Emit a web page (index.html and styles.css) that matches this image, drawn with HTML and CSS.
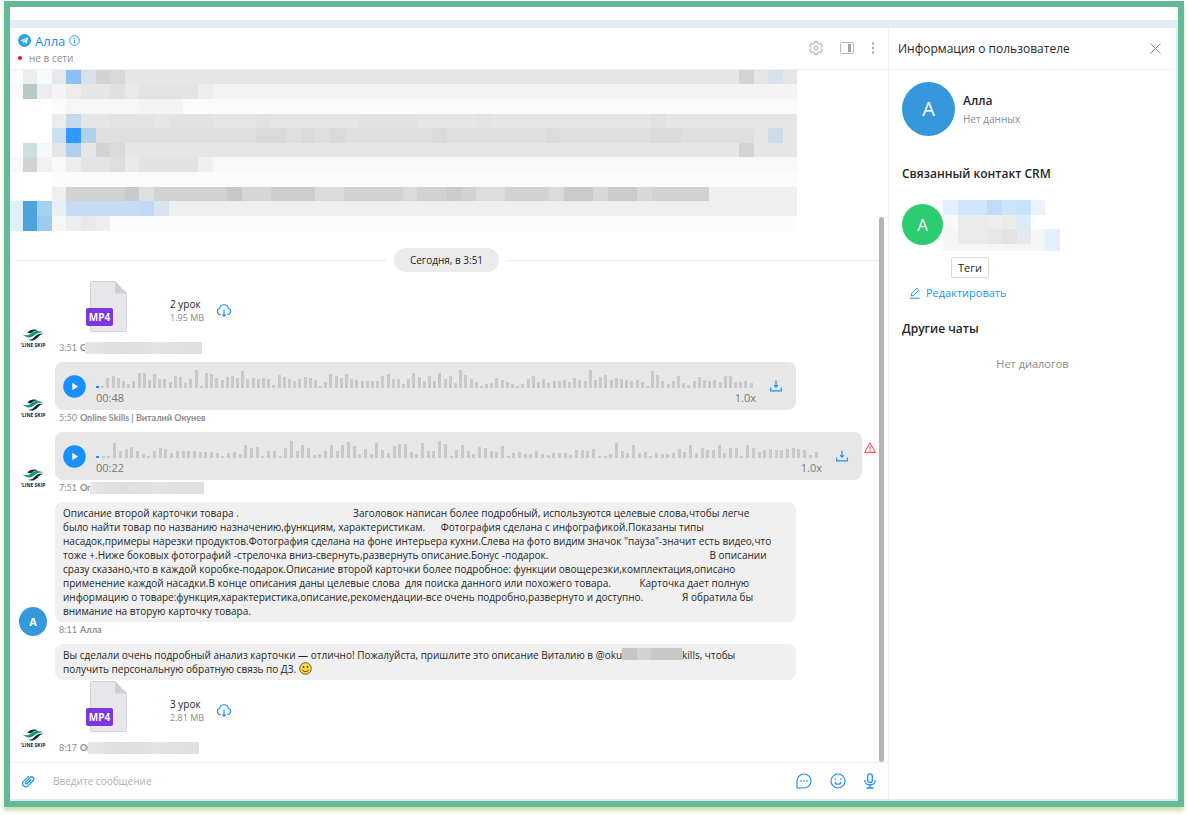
FILE: index.html
```html
<!DOCTYPE html>
<html lang="ru">
<head>
  <meta charset="UTF-8" />
  <meta name="viewport" content="width=device-width, initial-scale=1.0"/>
  <title>Чат - Алла</title>
  <link rel="stylesheet" href="styles.css">
</head>
<body>
  <!-- shared icons -->
  <svg class="sprite" aria-hidden="true">
    <symbol id="i-file" viewBox="0 0 42 51">
      <path d="M4.500 1.500a1 1 0 0 1 1-1H29L40.500 12v37.500a1 1 0 0 1-1 1h-34a1 1 0 0 1-1-1z" fill="#e6e6eb" stroke="#d2d2d8"/>
      <path d="M29 .5L40.500 12.500H30a1 1 0 0 1-1-1z" fill="#cfcfda"/>
      <rect x="0" y="27" width="27" height="18" rx="2" fill="#7a36e0"/>
    </symbol>
    <symbol id="i-cloud" viewBox="0 0 16 13">
      <path d="M5 10.500H4A3.200 3.200 0 0 1 3.600 4.300 4.500 4.500 0 0 1 12.400 4.300 3.200 3.200 0 0 1 12 10.500H11M8 5.500V12M6.300 10.300L8 12.200 9.700 10.300" fill="none" stroke="#1890ff" stroke-width="1.200"/>
    </symbol>
    <symbol id="i-play" viewBox="0 0 23 23">
      <circle cx="11.500" cy="11.500" r="11.300" fill="#1890ff"/>
      <path d="M9.300 7.700L15 11.500 9.300 15.300z" fill="#fff"/>
    </symbol>
    <symbol id="i-download" viewBox="0 0 12 12">
      <path d="M6 .5V7M4 5.200L6 7.200 8 5.200M.7 7.500V10.800H11.300V7.500" fill="none" stroke="#1890ff" stroke-width="1.200"/>
    </symbol>
    <symbol id="i-brand" viewBox="0 0 24 12">
      <path d="M6.500 3.900C8.500 .6 13.500 -.3 17 1.600 13.500 1.400 12 2.300 10 4.200z" fill="#15203a"/>
      <path d="M1.500 5C5 7.300 8 6 10.500 3.900 13.500 1.400 18 1.400 22 3.500 18 3.300 15.500 4.200 13 6.600 9.500 9.600 4.500 9 1.500 5z" fill="#179678"/>
      <path d="M14.200 7.200C16.500 4.800 19 4.500 22.300 4.800 19.500 5.500 18.300 6.800 16.800 8.500 14 11.800 9.500 12.400 6.800 10.600 10.500 10.900 12.500 9.300 14.200 7.200z" fill="#15203a"/>
    </symbol>
  </svg>

  <div class="frame">
    <div class="top-strip"></div>
    <div class="app">
      <main class="chat">
        <header class="chat-header">
          <div class="peer">
            <div class="peer-name">
              <svg width="13" height="13" viewBox="0 0 13 13"><circle cx="6.500" cy="6.500" r="6.500" fill="#2ca5e0"/><path d="M2.500 6.400L10 3.300 8.800 9.800 6.300 8 5.200 9.200 4.900 7.300z" fill="#fff"/><path d="M4.900 7.300L8.400 4.800" stroke="#2ca5e0" stroke-width=".7"/></svg>
              <a href="#">Алла</a>
              <svg width="11" height="11" viewBox="0 0 11 11" fill="none" stroke="#1890ff"><circle cx="5.500" cy="5.500" r="4.800" stroke-width=".9"/><path d="M5.500 4.700V8.200M5.500 2.700V3.700"/></svg>
            </div>
            <div class="peer-status"><span class="dot"></span>не в сети</div>
          </div>
          <div class="tools">
            <button aria-label="Настройки"><svg width="14" height="14" viewBox="0 0 14 14" fill="none" stroke="#9a9a9a" stroke-width=".9"><path d="M5.600 .7H8.400L8.900 2.500 10.300 3.300 12.100 2.800 13.400 5.200 12.100 6.500V7.500L13.400 8.800 12.100 11.200 10.300 10.700 8.900 11.500 8.400 13.300H5.600L5.100 11.500 3.700 10.700 1.900 11.200 .6 8.800 1.900 7.500V6.500L.6 5.200 1.900 2.800 3.700 3.300 5.100 2.500z"/><circle cx="7" cy="7" r="2.100"/></svg></button>
            <button aria-label="Панель"><svg width="14" height="12" viewBox="0 0 14 12"><rect x=".5" y=".5" width="13" height="11" rx="1" fill="#fff" stroke="#b8b8b8"/><rect x="8" y="2" width="3" height="8" fill="#a3a3a3"/></svg></button>
            <button aria-label="Меню"><svg width="4" height="12" viewBox="0 0 4 12" fill="#888"><circle cx="2" cy="1.500" r="1"/><circle cx="2" cy="6" r="1"/><circle cx="2" cy="10.500" r="1"/></svg></button>
          </div>
        </header>

        <section class="messages">
          <svg class="mosaic" id="history" width="787" height="161" viewBox="0 0 787 161" shape-rendering="crispEdges"></svg>

          <div class="day"><span>Сегодня, в 3:51</span></div>

          <article class="msg">
            <div class="brand"><svg width="24" height="12"><use href="#i-brand"/></svg><span>'LINE SKIP</span></div>
            <div class="msg-body">
              <div class="file">
                <div class="file-icon"><svg width="42" height="51"><use href="#i-file"/></svg><b>MP4</b></div>
                <div class="file-info"><span>2 урок</span><small>1.95 MB</small></div>
                <button aria-label="Скачать"><svg width="16" height="13"><use href="#i-cloud"/></svg></button>
              </div>
              <div class="meta">3:51 <b>O</b><i class="mask mask-a"></i></div>
            </div>
          </article>

          <article class="msg">
            <div class="brand"><svg width="24" height="12"><use href="#i-brand"/></svg><span>'LINE SKIP</span></div>
            <div class="msg-body">
              <div class="audio">
                <button aria-label="Слушать"><svg width="23" height="23"><use href="#i-play"/></svg></button>
                <div class="track">
                  <div class="wave" id="wave-1"></div>
                  <div class="track-info"><span>00:48</span><span>1.0x</span></div>
                </div>
                <button aria-label="Скачать"><svg width="12" height="12"><use href="#i-download"/></svg></button>
              </div>
              <div class="meta">5:50 <b>Online Skills | Виталий Окунев</b></div>
            </div>
          </article>

          <article class="msg msg-wide">
            <div class="brand"><svg width="24" height="12"><use href="#i-brand"/></svg><span>'LINE SKIP</span></div>
            <div class="msg-body">
              <div class="audio">
                <button aria-label="Слушать"><svg width="23" height="23"><use href="#i-play"/></svg></button>
                <div class="track">
                  <div class="wave" id="wave-2"></div>
                  <div class="track-info"><span>00:22</span><span>1.0x</span></div>
                </div>
                <button aria-label="Скачать"><svg width="12" height="12"><use href="#i-download"/></svg></button>
              </div>
              <div class="meta">7:51 <b>On</b><i class="mask mask-b"></i></div>
            </div>
            <svg class="warn" width="12" height="11" viewBox="0 0 12 11" fill="none" stroke="#f5222d" stroke-width=".9"><path d="M6 .8L11.300 10.300H.7zM6 4V7.300M6 8V9"/></svg>
          </article>

          <article class="msg">
            <div class="avatar avatar-s">A</div>
            <div class="msg-body">
              <div class="bubble">Описание второй карточки товара .                                            Заголовок написан более подробный, используются целевые слова,чтобы легче
было найти товар по названию назначению,функциям, характеристикам.      Фотография сделана с инфографикой.Показаны типы
насадок,примеры нарезки продуктов.Фотография сделана на фоне интерьера кухни.Слева на фото видим значок "пауза"-значит есть видео,что
тоже +.Ниже боковых фотографий -стрелочка вниз-свернуть,развернуть описание.Бонус -подарок.                                                              В описании
сразу сказано,что в каждой коробке-подарок.Описание второй карточки более подробное: функции овощерезки,комплектация,описано
применение каждой насадки.В конце описания даны целевые слова  для поиска данного или похожего товара.           Карточка дает полную
информацию о товаре:функция,характеристика,описание,рекомендации-все очень подробно,развернуто и доступно.               Я обратила бы
внимание на вторую карточку товара.</div>
              <div class="meta">8:11 <b>Алла</b></div>
            </div>
          </article>

          <article class="msg msg-tight">
            <div class="avatar-gap"></div>
            <div class="msg-body">
              <div class="bubble">Вы сделали очень подробный анализ карточки — отлично! Пожалуйста, пришлите это описание Виталию в @oku<i class="mask mask-c"></i>kills, чтобы<br>получить персональную обратную связь по ДЗ. <svg class="emoji" width="13" height="13" viewBox="0 0 13 13"><circle cx="6.500" cy="6.500" r="5.800" fill="#ffd83b" stroke="#5a5030" stroke-width=".9"/><path d="M3.500 7.700C4.500 10.300 8.500 10.300 9.500 7.700" fill="none" stroke="#3d3520"/><circle cx="4.500" cy="4.900" r=".9" fill="#3d3520"/><circle cx="8.500" cy="4.900" r=".9" fill="#3d3520"/></svg></div>
            </div>
          </article>

          <article class="msg">
            <div class="brand"><svg width="24" height="12"><use href="#i-brand"/></svg><span>'LINE SKIP</span></div>
            <div class="msg-body">
              <div class="file">
                <div class="file-icon"><svg width="42" height="51"><use href="#i-file"/></svg><b>MP4</b></div>
                <div class="file-info"><span>3 урок</span><small>2.81 MB</small></div>
                <button aria-label="Скачать"><svg width="16" height="13"><use href="#i-cloud"/></svg></button>
              </div>
              <div class="meta">8:17 <b>Or</b><i class="mask mask-d"></i></div>
            </div>
          </article>

          <div class="scrollbar"></div>
        </section>

        <form class="compose">
          <button type="button" aria-label="Прикрепить"><svg width="13" height="13" viewBox="0 0 13 13" fill="none" stroke="#1890ff" stroke-width="1.200"><path d="M9.300 4.200L4.900 8.700A1 1 0 0 1 3.500 7.300L8.200 2.500A2.100 2.100 0 0 1 11.200 5.500L6 10.800A3.100 3.100 0 0 1 1.600 6.400L6.900 1.100"/></svg></button>
          <input type="text" placeholder="Введите сообщение" aria-label="Введите сообщение">
          <button type="button" aria-label="Шаблоны"><svg width="16" height="16" viewBox="0 0 16 16" fill="none" stroke="#1890ff" stroke-width="1.200"><path d="M1 15V8A7 7 0 1 1 8 15z"/><path d="M4.200 8H5.600M7.300 8H8.700M10.400 8H11.800" stroke-width="1.400"/></svg></button>
          <button type="button" aria-label="Эмодзи"><svg width="16" height="16" viewBox="0 0 16 16" fill="none" stroke="#1890ff" stroke-width="1.200"><circle cx="8" cy="8" r="7"/><path d="M5 8.800C5.500 12 10.500 12 11 8.800M4.500 6.200H6M10 6.200H11.500"/></svg></button>
          <button type="button" aria-label="Голосовое сообщение"><svg width="12" height="16" viewBox="0 0 12 16" fill="none" stroke="#1890ff" stroke-width="1.300"><rect x="3.700" y=".8" width="4.600" height="8.700" rx="2.300"/><path d="M.8 7C.8 13.600 11.200 13.600 11.200 7M6 12V15M2.500 15H9.500"/></svg></button>
        </form>
      </main>

      <aside class="info">
        <header class="info-header">
          <h2>Информация о пользователе</h2>
          <button aria-label="Закрыть"><svg width="11" height="11" viewBox="0 0 11 11" stroke="#8c8c8c"><path d="M.5 .5L10.500 10.500M10.500 .5L.5 10.500"/></svg></button>
        </header>
        <div class="info-body">
          <div class="user">
            <div class="avatar avatar-l">A</div>
            <div class="user-text"><strong>Алла</strong><span>Нет данных</span></div>
          </div>
          <h3>Связанный контакт CRM</h3>
          <div class="contact">
            <div class="avatar avatar-m">A</div>
            <svg class="mosaic" id="contact" width="117" height="51" viewBox="0 0 117 51" shape-rendering="crispEdges"></svg>
          </div>
          <button class="tags">Теги</button>
          <a class="edit" href="#"><svg width="11" height="12" viewBox="0 0 11 12" fill="none" stroke="#1890ff"><path d="M2.200 8.900L2.600 6.600 7.800 1.200 9.800 3.200 4.500 8.500zM.5 11.200H10.500"/></svg>Редактировать</a>
          <h3>Другие чаты</h3>
          <p class="empty">Нет диалогов</p>
        </div>
      </aside>
    </div>
  </div>

  <script>
    const wave1 = [2,2,10,12,10,7,4,7,15,15,8,14,9,9,6,12,11,5,9,18,2,15,14,10,8,11,12,10,17,9,10,9,10,9,3,13,11,9,7,9,11,10,8,2,6,14,12,10,14,9,8,7,7,7,7,12,14,9,9,4,9,15,11,7,12,7,15,9,12,5,18,13,9,6,2,4,5,10,8,6,4,2,4,9,12,6,9,5,7,7,8,6,10,8,7,18,8,11,13,8,10,9,8,7,8,6,2,17,13,7,4,7,12,5,3,7,11,8,7,8,6,12,12,6,6,7,5];
    const wave2 = [2,2,2,15,7,9,11,7,4,2,7,10,9,5,7,7,7,7,6,6,6,5,2,5,6,4,13,10,11,2,7,7,2,10,17,7,13,10,3,4,7,13,7,13,16,12,4,9,4,15,8,5,12,14,14,6,4,15,7,7,17,14,2,8,13,7,4,11,10,7,6,12,2,5,6,4,4,7,4,3,5,5,5,3,8,8,7,9,2,2,4,15,7,5,13,5,6,2,5,4,4,5,9,6,13,5,10,8,8,13,5,10,10,2,13,10,6,8,9,8,8,9,10,9,8,3,6];

    function drawWave(id, heights) {
      document.getElementById(id).innerHTML = heights.map(h => `<i style="height:${h}px"></i>`).join("");
    }

    // each block: x, y, width, height, color
    const history = [
      [0,0,787,14,"#e6e6e6"],[0,0,13,14,"#fcfcfc"],[13,0,14,14,"#e7eeec"],[27,0,15,14,"#f6fbfa"],[42,0,14,14,"#e3e9ec"],[56,0,15,14,"#8cc0f4"],[71,0,15,14,"#dae2e9"],[86,0,14,14,"#d3d3d3"],[100,0,15,14,"#d9d9d9"],[729,0,15,14,"#d4d4d4"],[758,0,15,14,"#d9e2ec"],
      [0,14,787,15,"#f4f4f4"],[0,14,13,15,"#f9f9f9"],[13,14,14,15,"#b8cac8"],[27,14,15,15,"#ededef"],[56,14,15,15,"#ececec"],[71,14,29,15,"#e6e6e6"],[100,14,15,15,"#e0e0e0"],[115,14,14,15,"#e8e8e8"],[129,14,59,15,"#e3e3e3"],[188,14,15,15,"#ededed"],
      [42,29,745,15,"#fbfbfb"],[56,29,73,15,"#f6f6f6"],[129,29,44,15,"#f3f3f3"],
      [42,44,745,14,"#e6e6e6"],[42,44,14,14,"#ececec"],[56,44,15,14,"#c7daec"],[100,44,44,14,"#e3e3e3"],[159,44,44,14,"#e2e2e2"],[246,44,15,14,"#e2e2e2"],[349,44,58,14,"#e2e2e2"],[466,44,15,14,"#e4e4e4"],[641,44,15,14,"#e1e1e1"],
      [42,58,745,15,"#e6e6e6"],[42,58,14,15,"#cbdff2"],[56,58,15,15,"#3399ff"],[71,58,15,15,"#b1d0ee"],[86,58,658,15,"#dfdfdf"],[246,58,30,15,"#dadada"],[291,58,14,15,"#dbdbdb"],[320,58,15,15,"#dadada"],[422,58,15,15,"#dbdbdb"],[536,58,15,15,"#dcdcdc"],[641,58,30,15,"#dbdbdb"],[758,58,15,15,"#cbdceb"],
      [42,73,745,14,"#e6e6e6"],[13,73,14,14,"#cbdfdc"],[27,73,15,14,"#f2f9f9"],[56,73,15,14,"#b1cfec"],[86,73,14,14,"#d3d3d3"],[100,73,15,14,"#dadada"],[729,73,15,14,"#d4d4d4"],
      [0,87,787,15,"#f8f8f8"],[13,87,14,15,"#cfd5d7"],[27,87,15,15,"#f1f1f3"],[56,87,15,15,"#ededed"],[71,87,29,15,"#e3e3e3"],[100,87,15,15,"#dedede"],[115,87,14,15,"#e9e9e9"],[129,87,59,15,"#e2e2e2"],[188,87,15,15,"#efefef"],
      [42,102,745,15,"#fbfbfb"],
      [42,117,745,14,"#efefef"],[56,117,643,14,"#d2d2d2"],[115,117,14,14,"#cacaca"],[129,117,15,14,"#dedede"],[217,117,15,14,"#c8c8c8"],[232,117,29,14,"#d6d6d6"],[261,117,44,14,"#cdcdcd"],[305,117,29,14,"#dadada"],[393,117,14,14,"#dadada"],[437,117,15,14,"#cccccc"],[466,117,29,14,"#dcdcdc"],[539,117,15,14,"#dadada"],[554,117,29,14,"#cbcbcb"],[583,117,15,14,"#d7d7d7"],[598,117,29,14,"#cccccc"],[627,117,15,14,"#d8d8d8"],
      [0,131,787,15,"#efefef"],[0,131,13,30,"#e0f0fa"],[13,131,14,30,"#4ca3df"],[27,131,15,15,"#a5d2ee"],[42,131,14,15,"#e9eff3"],[56,131,88,15,"#c5dcf4"],[129,131,15,15,"#c0d9f5"],[144,131,15,15,"#d8e4ef"],
      [27,146,15,15,"#9bcbee"],[42,146,745,15,"#fcfcfc"],[42,146,14,15,"#f6f6f6"],[56,146,15,15,"#ededed"],[71,146,15,15,"#e9e9e9"],[86,146,14,15,"#eeeeee"]
    ];
    const contact = [
      [0,0,15,15,"#e3effe"],[15,0,29,15,"#d1e6fe"],[44,0,15,15,"#c0dcfd"],[59,0,15,15,"#cde4fd"],[74,0,14,15,"#c6e3fd"],[88,0,14,15,"#e7f3ff"],
      [0,15,15,14,"#f9f9f9"],[15,15,29,14,"#ebebeb"],[44,15,15,14,"#eeeeee"],[59,15,15,14,"#ebebeb"],[74,15,14,14,"#d9edff"],
      [0,29,102,22,"#f5f5f5"],[15,29,29,15,"#eaeaea"],[44,29,15,15,"#e7e7e7"],[59,29,15,15,"#e3e3e3"],[74,29,14,15,"#e5eaee"],[102,29,15,22,"#e1effe"]
    ];

    function drawBlocks(id, blocks) {
      document.getElementById(id).innerHTML = blocks.map(([x, y, w, h, c]) =>
        `<rect x="${x}" y="${y}" width="${w}" height="${h}" fill="${c}"/>`).join("");
    }

    drawWave("wave-1", wave1);
    drawWave("wave-2", wave2);
    drawBlocks("history", history);
    drawBlocks("contact", contact);
  </script>
</body>
</html>
```
FILE: styles.css
```css
* {
  box-sizing: border-box;
}

body {
  margin: 0;
  padding: 1px 4px 8px;
  min-height: 100vh;
  display: flex;
  background: #fff;
  color: #262626;
  font-family: 'Open Sans', 'Noto Sans', sans-serif;
  font-size: 11px;
  line-height: 14px;
}

button {
  display: flex;
  padding: 0;
  border: none;
  background: none;
  font: inherit;
  color: inherit;
  cursor: pointer;
}

svg {
  display: block;
  flex-shrink: 0;
}

a {
  color: #1890ff;
  text-decoration: none;
}

h2, h3, p {
  margin: 0;
}

.sprite {
  position: absolute;
  width: 0;
  height: 0;
}

.frame {
  flex: 1;
  min-width: 0;
  display: flex;
  flex-direction: column;
  border: 6px solid #62bb96;
  box-shadow: 0 4px 4px #cfe0b5;
}

.top-strip {
  height: 21px;
  border-bottom: 8px solid #e3ecf5;
}

.app {
  flex: 1;
  display: flex;
  border: solid #dfe9f2;
  border-width: 0 2px 2px 0;
}

/* chat */
.chat {
  flex: 1;
  min-width: 0;
  display: flex;
  flex-direction: column;
}

.chat-header {
  display: flex;
  justify-content: space-between;
  align-items: center;
  height: 42px;
  padding: 0 13px 2px 8px;
  border-bottom: 1px solid #f0f0f0;
}

.peer-name {
  display: flex;
  align-items: center;
  gap: 4px;
  font-size: 13px;
  line-height: 20px;
}

.peer-status {
  display: flex;
  align-items: center;
  gap: 7px;
  color: #8c8c8c;
  font-size: 10px;
}

.dot {
  width: 4px;
  height: 4px;
  border-radius: 50%;
  background: #f5121d;
}

.tools {
  display: flex;
  align-items: center;
  gap: 17px;
}

.messages, .compose {
  font-size: 10px;
}

.messages {
  flex: 1;
  position: relative;
  display: flex;
  flex-direction: column;
  padding-bottom: 8px;
}

.day {
  display: flex;
  align-items: center;
  gap: 8px;
  margin: 17px 9px 9px 4px;
}

.day::before, .day::after {
  content: "";
  flex: 1;
  height: 1px;
  background: #ebebeb;
}

.day span {
  padding: 5px 16px;
  border-radius: 12px;
  background: #ebebeb;
}

.msg {
  display: flex;
  align-items: flex-end;
  gap: 8px;
  margin-bottom: 8px;
  padding: 0 92px 0 9px;
}

.msg:nth-last-child(2) {
  margin-bottom: 0;
}

.msg-wide {
  position: relative;
  padding-right: 26px;
}

.msg-tight {
  margin-bottom: 1px;
}

.msg-body {
  flex: 1;
  min-width: 0;
}

.brand {
  width: 28px;
  height: 25px;
  display: flex;
  flex-direction: column;
  align-items: center;
  overflow: hidden;
}

.brand span {
  color: #15203a;
  font-size: 5px;
  font-weight: 700;
  line-height: 9px;
  white-space: nowrap;
}

.avatar-gap {
  width: 28px;
}

.avatar {
  display: flex;
  align-items: center;
  justify-content: center;
  flex-shrink: 0;
  border-radius: 50%;
  background: #3498db;
  color: #fff;
}

.avatar-s {
  width: 28px;
  height: 29px;
  font-size: 11px;
  font-weight: 700;
}

.avatar-m {
  width: 41px;
  height: 41px;
  margin-bottom: 2px;
  background: #2ecc71;
  font-size: 17px;
}

.avatar-l {
  width: 53px;
  height: 54px;
  font-size: 20px;
}

.meta {
  display: flex;
  align-items: center;
  gap: 3px;
  height: 14px;
  padding: 2px 0 0 4px;
  color: #8c8c8c;
  font-family: Lato, 'Open Sans', sans-serif;
  font-size: 9px;
}

.meta b {
  font-weight: 700;
}

.mask {
  display: inline-block;
  height: 12px;
  background: linear-gradient(90deg, #e6e6e6, #dedede 30%, #e3e3e3 60%, #e0e0e0);
}

.meta .mask {
  margin-left: -5px;
}

.mask-a {
  width: 117px;
}

.mask-b {
  width: 114px;
}

.mask-d {
  width: 111px;
}

.mask-c {
  width: 60px;
  vertical-align: top;
  background: linear-gradient(90deg, #c6c6c6 25%, #d2d2d2 25% 48%, #c8c8c8 48%);
}

.file {
  display: flex;
  padding-left: 31px;
  margin-bottom: 8px;
}

.file-icon {
  position: relative;
}

.file-icon b {
  position: absolute;
  left: 0;
  top: 29px;
  width: 27px;
  color: #fff;
  text-align: center;
}

.file-info {
  width: 46px;
  margin: 16px 0 0 42px;
  display: flex;
  flex-direction: column;
}

.file-info small {
  color: #8c8c8c;
  font-size: 9px;
}

.file button {
  margin-top: 23px;
}

.audio {
  display: flex;
  align-items: center;
  gap: 10px;
  height: 48px;
  padding: 0 14px 0 8px;
  border-radius: 8px;
  background: #e7e7e7;
}

.track {
  flex: 1;
  margin: 2px 4px 0 0;
}

.wave {
  display: flex;
  align-items: flex-end;
  justify-content: space-between;
  height: 18px;
  margin: 0 3px 3px 0;
}

.wave i {
  width: 3px;
  background: #c9c9c9;
}

.wave i:first-child {
  background: #1890ff;
}

.track-info {
  display: flex;
  justify-content: space-between;
  color: #7a7a7a;
  font-size: 11px;
}

.warn {
  position: absolute;
  right: 12px;
  top: 10px;
}

.bubble {
  padding: 4px 8px;
  border-radius: 8px;
  background: #f0f0f0;
  white-space: pre;
}

.emoji {
  display: inline-block;
  vertical-align: top;
}

.scrollbar {
  position: absolute;
  top: 147px;
  right: 4px;
  bottom: 0;
  width: 5px;
  border-radius: 3px;
  background: #b4b4b9;
}

.compose {
  display: flex;
  align-items: center;
  gap: 18px;
  height: 37px;
  padding: 0 12px;
  border-top: 1px solid #f0f0f0;
}

.compose input {
  flex: 1;
  min-width: 0;
  padding: 0;
  border: none;
  outline: none;
  font: inherit;
}

.compose input::placeholder {
  color: #b0b0b0;
}

/* user info panel */
.info {
  width: 25%;
  max-width: 288px;
  border-left: 1px solid #f0f0f0;
}

.info-header {
  display: flex;
  justify-content: space-between;
  align-items: center;
  height: 42px;
  padding: 0 15px 0 9px;
  border-bottom: 1px solid #f0f0f0;
}

.info-header h2 {
  font-size: 12px;
  font-weight: 400;
}

.info-body {
  padding: 12px 0 0 13px;
}

.user {
  display: flex;
  align-items: center;
  gap: 8px;
  margin-bottom: 30px;
}

.user-text {
  display: flex;
  flex-direction: column;
  gap: 4px;
  padding-top: 2px;
}

.user-text strong {
  font-size: 12px;
  font-weight: 600;
}

.user-text span {
  color: #8c8c8c;
  font-size: 10px;
}

.info h3 {
  font-size: 12px;
  font-weight: 600;
  line-height: 16px;
}

.contact {
  display: flex;
  align-items: center;
  margin: 18px 0 6px;
}

.tags {
  margin-left: 49px;
  padding: 2px 6px;
  border: 1px solid #d9d9d9;
  border-radius: 2px;
  background: #fff;
  line-height: 15px;
}

.edit {
  display: flex;
  align-items: center;
  gap: 6px;
  margin: 7px 0 20px 7px;
  line-height: 16px;
}

.empty {
  margin: 20px 13px 0 0;
  color: #8c8c8c;
  text-align: center;
}
```
